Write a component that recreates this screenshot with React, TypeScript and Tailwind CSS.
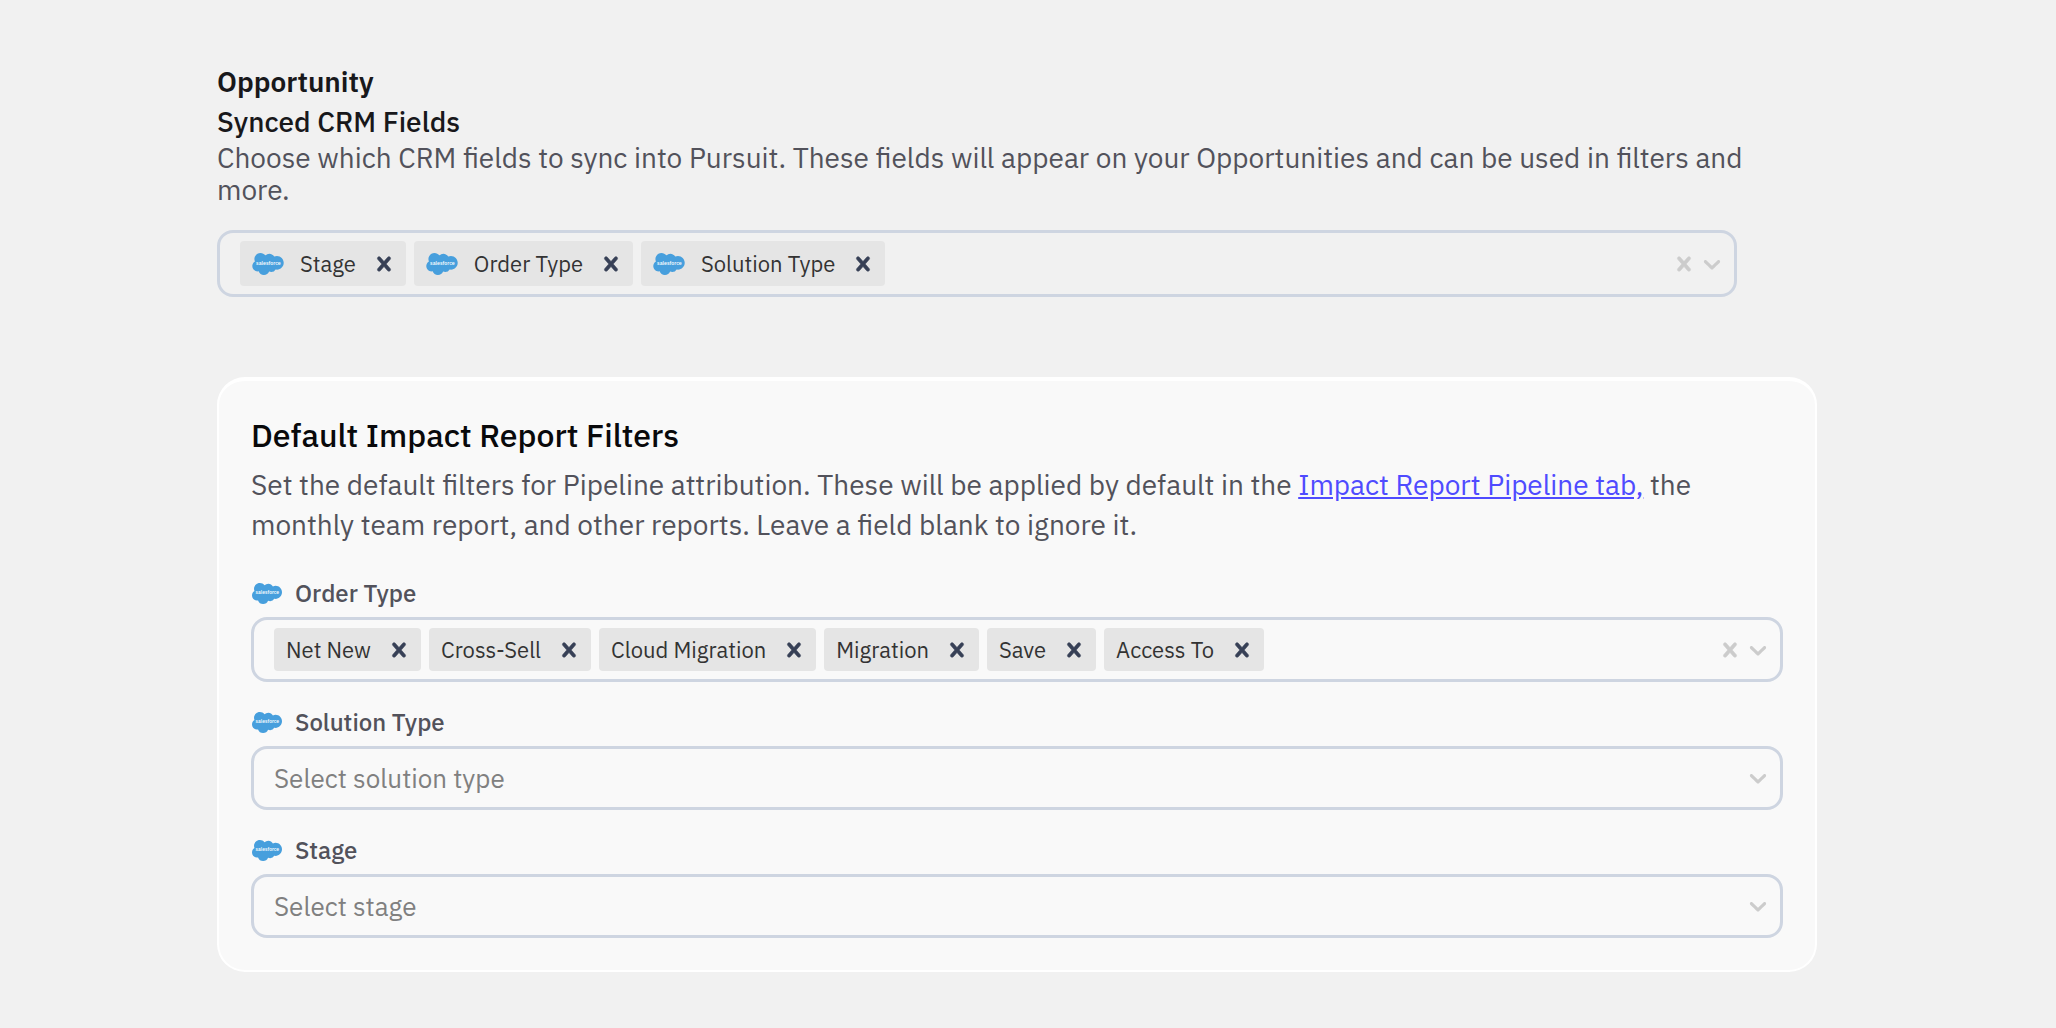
import { useState } from "react";

const SYNCED_FIELDS = ["Stage", "Order Type", "Solution Type"];

const ORDER_TYPES = [
  "Net New",
  "Cross-Sell",
  "Cloud Migration",
  "Migration",
  "Save",
  "Access To",
];

export default function App() {
  return (
    <div className="min-h-screen bg-[#f1f1f1] pt-[66px] pr-[239px] pb-14 pl-[217px] font-['IBM_Plex_Sans',Roboto,sans-serif] text-[#52525b]">
      <section className="mb-20">
        <h2 className="text-[28px] leading-8 font-semibold text-[#18181b]">
          Opportunity
        </h2>
        <h3
          id="synced-label"
          className="mt-2 text-[28px] leading-8 font-medium text-[#18181b]"
        >
          Synced CRM Fields
        </h3>
        <p className="mt-1 mr-10 mb-6 text-[28px] leading-8">
          Choose which CRM fields to sync into Pursuit. These fields will appear
          on your Opportunities and can be used in filters and more.
        </p>
        <div className="mr-20">
          <MultiSelect
            id="synced"
            labelledBy="synced-label"
            initial={SYNCED_FIELDS}
            withLogo
          />
        </div>
      </section>

      <section className="rounded-[28px] border-2 border-t-4 border-white bg-[#f9f9f9] px-8 pt-8 pb-8">
        <h2 className="text-[32px] leading-11 font-medium text-[#09090b]">
          Default Impact Report Filters
        </h2>
        <p className="mt-2 text-[28px] leading-10">
          Set the default filters for Pipeline attribution. These will be
          applied by default in the{" "}
          <a href="#pipeline" className="text-[#4f4bff] underline">
            Impact Report Pipeline tab,
          </a>{" "}
          the monthly team report, and other reports. Leave a field blank to
          ignore it.
        </p>

        <div className="mt-8 flex flex-col gap-6">
          <Field id="order-type" label="Order Type">
            <MultiSelect id="order-type" initial={ORDER_TYPES} />
          </Field>
          <Field id="solution-type" label="Solution Type">
            <MultiSelect id="solution-type" placeholder="Select solution type" />
          </Field>
          <Field id="stage" label="Stage">
            <MultiSelect id="stage" placeholder="Select stage" />
          </Field>
        </div>
      </section>
    </div>
  );
}

function Field({
  id,
  label,
  children,
}: {
  id: string;
  label: string;
  children: React.ReactNode;
}) {
  return (
    <div>
      <label
        htmlFor={id}
        className="mb-2 flex h-8 items-center gap-3 text-2xl leading-8 font-medium"
      >
        <SalesforceLogo className="h-[21px] w-8" />
        {label}
      </label>
      {children}
    </div>
  );
}

function MultiSelect({
  id,
  labelledBy,
  initial = [],
  placeholder,
  withLogo,
}: {
  id: string;
  labelledBy?: string;
  initial?: string[];
  placeholder?: string;
  withLogo?: boolean;
}) {
  const [values, setValues] = useState(initial);

  return (
    <div className="flex min-h-16 items-center rounded-2xl border-[3px] border-[#ced5e1] pr-2 pl-5">
      <div className="flex flex-1 flex-wrap items-center gap-2">
        {values.map((value) => (
          <span
            key={value}
            className={`my-2 flex items-center rounded-sm bg-[#e5e5e5] pr-2 pl-3 text-[22px] leading-7 text-[#333333] ${
              withLogo ? "h-[45px]" : "h-[43px]"
            }`}
          >
            {withLogo && <SalesforceLogo className="mr-4 h-[22px] w-8" />}
            {value}
            <button
              type="button"
              aria-label={`Remove ${value}`}
              className="ml-3.5 text-[#374056]"
              onClick={() => setValues(values.filter((v) => v !== value))}
            >
              <CrossIcon />
            </button>
          </span>
        ))}
        <input
          id={id}
          role="combobox"
          aria-expanded={false}
          aria-controls={`${id}-list`}
          aria-labelledby={labelledBy}
          placeholder={values.length ? undefined : placeholder}
          className="min-w-0 flex-1 text-[26px] leading-10 outline-none placeholder:text-[#808080]"
        />
      </div>
      {values.length > 0 && (
        <button
          type="button"
          aria-label="Clear all"
          className="text-[#cccccc]"
          onClick={() => setValues([])}
        >
          <CrossIcon />
        </button>
      )}
      <button type="button" aria-label="Open options" className="text-[#cccccc]">
        <ChevronIcon />
      </button>
    </div>
  );
}

function CrossIcon() {
  return (
    <svg
      viewBox="0 0 20 20"
      className="size-7 fill-current stroke-current stroke-[0.4]"
      aria-hidden="true"
    >
      <path d="M14.348 14.849c-0.469 0.469-1.229 0.469-1.697 0l-2.651-3.030-2.651 3.029c-0.469 0.469-1.229 0.469-1.697 0-0.469-0.469-0.469-1.229 0-1.697l2.758-3.15-2.759-3.152c-0.469-0.469-0.469-1.228 0-1.697s1.228-0.469 1.697 0l2.652 3.031 2.651-3.031c0.469-0.469 1.228-0.469 1.697 0s0.469 1.229 0 1.697l-2.758 3.152 2.758 3.15c0.469 0.469 0.469 1.229 0 1.698z" />
    </svg>
  );
}

function ChevronIcon() {
  return (
    <svg viewBox="0 0 20 20" className="size-7 fill-current" aria-hidden="true">
      <path d="M4.516 7.548c0.436-0.446 1.043-0.481 1.576 0l3.908 3.747 3.908-3.747c0.533-0.481 1.141-0.446 1.574 0 0.436 0.445 0.408 1.197 0 1.615-0.406 0.418-4.695 4.502-4.695 4.502-0.217 0.223-0.502 0.335-0.787 0.335s-0.57-0.112-0.789-0.335c0 0-4.287-4.084-4.695-4.502s-0.436-1.17 0-1.615z" />
    </svg>
  );
}

function SalesforceLogo({ className }: { className: string }) {
  return (
    <svg viewBox="0 3.6 24 16.8" className={className} aria-hidden="true">
      <path
        fill="#479fdd"
        d="M10.006 5.415a4.195 4.195 0 013.045-1.306c1.56 0 2.954.9 3.69 2.205.63-.3 1.35-.45 2.1-.45 2.85 0 5.159 2.34 5.159 5.22s-2.31 5.22-5.176 5.22c-.345 0-.69-.044-1.02-.104a3.75 3.75 0 01-3.3 1.95c-.6 0-1.155-.15-1.65-.375A4.314 4.314 0 018.88 20.4a4.302 4.302 0 01-4.05-2.82c-.27.062-.54.076-.825.076-2.204 0-4.005-1.8-4.005-4.05 0-1.5.811-2.805 2.01-3.51-.255-.57-.39-1.2-.39-1.846 0-2.58 2.1-4.65 4.65-4.65 1.53 0 2.85.705 3.72 1.8z"
      />
      <text
        x="12.3"
        y="12.6"
        textAnchor="middle"
        fontSize="4"
        fontWeight="500"
        fill="#ffffff"
      >
        salesforce
      </text>
    </svg>
  );
}
